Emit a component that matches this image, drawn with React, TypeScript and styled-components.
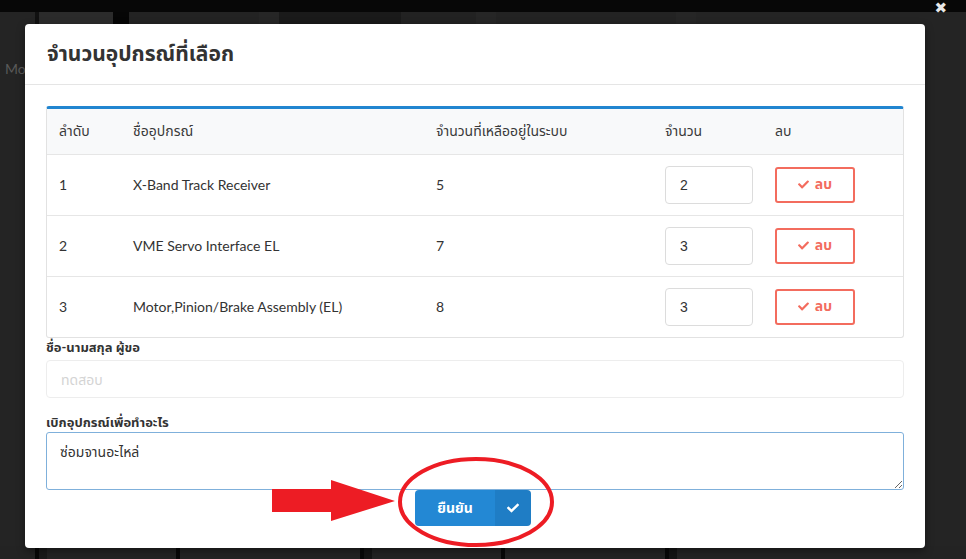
import styled, { createGlobalStyle } from 'styled-components'
import { FaCheck } from 'react-icons/fa'

const GlobalStyle = createGlobalStyle`
  html, body {
    margin: 0;
    padding: 0;
    background: #242424;
    overflow: hidden;
  }
  * {
    box-sizing: border-box;
  }
`

const font = `'Lato', 'Noto Sans Thai', 'Noto Sans', sans-serif`

const Screen = styled.div`
  position: relative;
  width: 966px;
  height: 559px;
  overflow: hidden;
  background: #242424;
  font-family: ${font};
`

const TopStrip = styled.div`
  height: 12px;
  background: #070707;
`

const BgBar = styled.div`
  display: flex;
  height: 16px;
`

const BgBlock = styled.div<{ $w: number; $c: string }>`
  width: ${(p) => p.$w}px;
  background: ${(p) => p.$c};
`

const BgText = styled.div`
  padding: 32px 0 0 5px;
  color: #5a5a5a;
  font-size: 14px;
`

const BottomStrip = styled.div`
  position: absolute;
  left: 0;
  right: 0;
  bottom: 0;
  height: 13px;
  display: flex;
  background: #232323;
`

const Close = styled.div`
  position: absolute;
  top: 1px;
  right: 19px;
  color: #e8e8e8;
  font-family: 'DejaVu Sans', sans-serif;
  font-size: 15px;
  line-height: 15px;
  font-weight: bold;
`

const Overlay = styled.div`
  position: absolute;
  inset: 0;
  padding-top: 24px;
  display: flex;
  justify-content: center;
  align-items: flex-start;
`

const Modal = styled.div`
  width: 900px;
  margin-left: -16px;
  background: #fff;
  border-radius: 4px;
  box-shadow: 0 3px 9px rgba(0, 0, 0, 0.4);
`

const Header = styled.div`
  height: 61px;
  padding: 0 22px;
  display: flex;
  align-items: center;
  border-bottom: 1px solid #e5e5e5;
`

const Title = styled.h4`
  margin: 0;
  font-size: 21px;
  font-weight: bold;
  color: #333;
`

const Body = styled.div`
  padding: 21px 21px 22px;
`

const TableBox = styled.div`
  border: 1px solid #e2e2e2;
  border-top: 3px solid #2185d0;
  border-radius: 3px;
  overflow: hidden;
`

const Table = styled.table`
  width: 100%;
  border-collapse: collapse;
  table-layout: fixed;
  font-size: 14px;
  color: #333;
`

const Col = styled.col<{ $w?: number }>`
  width: ${(p) => (p.$w ? `${p.$w}px` : 'auto')};
`

const Th = styled.th`
  height: 45px;
  padding: 0 0 0 12px;
  text-align: left;
  font-weight: normal;
  font-size: 14px;
  background: #f8f9fa;
  color: #3a3a3a;
`

const Td = styled.td`
  height: 61px;
  padding: 0 0 0 12px;
  border-top: 1px solid #e6e6e6;
`

const QtyInput = styled.input`
  width: 88px;
  height: 38px;
  padding: 0 14px;
  border: 1px solid #dcdcdc;
  border-radius: 4px;
  font-family: 'Liberation Sans', sans-serif;
  font-size: 14px;
  color: #333;
  outline: none;
`

const DeleteButton = styled.button`
  display: inline-flex;
  align-items: center;
  justify-content: center;
  gap: 6px;
  width: 80px;
  height: 36px;
  border: 2px solid #f36c5e;
  border-radius: 3px;
  background: #fff;
  color: #f36c5e;
  font-family: ${font};
  font-size: 14px;
  font-weight: bold;
  svg {
    font-size: 11px;
  }
`

const Label = styled.label<{ $top: number; $h: number }>`
  display: block;
  margin-top: ${(p) => p.$top}px;
  height: ${(p) => p.$h}px;
  line-height: 17px;
  font-size: 13px;
  font-weight: bold;
  color: #333;
`

const TextInput = styled.input`
  width: 100%;
  height: 38px;
  padding: 0 14px;
  border: 1px solid #ededed;
  border-radius: 4px;
  background: #fff;
  font-family: ${font};
  font-size: 14px;
  &::placeholder {
    color: #d4d4d4;
  }
`

const TextArea = styled.textarea`
  display: block;
  width: 100%;
  height: 58px;
  padding: 9px 13px;
  border: 1px solid #7fb0db;
  border-radius: 3px;
  font-family: ${font};
  font-size: 14px;
  color: #333;
  outline: none;
`

const Actions = styled.div`
  display: flex;
  justify-content: center;
  padding-right: 4px;
`

const ConfirmButton = styled.button`
  display: flex;
  height: 36px;
  padding: 0;
  border: none;
  border-radius: 4px;
  overflow: hidden;
  color: #fff;
  font-family: ${font};
  font-size: 14px;
  font-weight: bold;
`

const ConfirmLabel = styled.span`
  display: flex;
  align-items: center;
  justify-content: center;
  width: 80px;
  background: #2388d4;
`

const ConfirmIcon = styled.span`
  display: flex;
  align-items: center;
  justify-content: center;
  width: 36px;
  background: #1f7dc5;
  font-size: 12px;
`

const Annotation = styled.svg`
  position: absolute;
  inset: 0;
  pointer-events: none;
`

const rows = [
  { no: 1, name: 'X-Band Track Receiver', left: 5, qty: 2 },
  { no: 2, name: 'VME Servo Interface EL', left: 7, qty: 3 },
  { no: 3, name: 'Motor,Pinion/Brake Assembly (EL)', left: 8, qty: 3 },
]

const topBlocks: [number, string][] = [
  [35, '#242424'], [4, '#111'], [74, '#2b2b2b'], [16, '#060606'], [130, '#232323'],
  [20, '#262626'], [122, '#1a1a1a'], [75, '#222'], [20, '#262626'], [180, '#232323'],
  [20, '#262626'], [250, '#242424'],
]

const bottomBlocks: [number, string][] = [
  [35, '#232323'], [4, '#080808'], [8, '#1a1a1a'], [130, '#232323'], [4, '#080808'],
  [180, '#232323'], [4, '#080808'], [8, '#141414'], [130, '#232323'], [4, '#080808'],
  [160, '#232323'], [4, '#080808'], [8, '#141414'], [290, '#232323'],
]

export default function App() {
  return (
    <Screen>
      <GlobalStyle />
      <TopStrip />
      <BgBar>
        {topBlocks.map(([w, c], i) => (
          <BgBlock key={i} $w={w} $c={c} />
        ))}
      </BgBar>
      <BgText>Mo</BgText>
      <BottomStrip>
        {bottomBlocks.map(([w, c], i) => (
          <BgBlock key={i} $w={w} $c={c} />
        ))}
      </BottomStrip>
      <Close>✖</Close>

      <Overlay>
        <Modal>
          <Header>
            <Title>จำนวนอุปกรณ์ที่เลือก</Title>
          </Header>
          <Body>
            <TableBox>
              <Table>
                <colgroup>
                  <Col $w={74} />
                  <Col $w={303} />
                  <Col $w={229} />
                  <Col $w={110} />
                  <Col />
                </colgroup>
                <thead>
                  <tr>
                    <Th>ลำดับ</Th>
                    <Th>ชื่ออุปกรณ์</Th>
                    <Th>จำนวนที่เหลืออยู่ในระบบ</Th>
                    <Th>จำนวน</Th>
                    <Th>ลบ</Th>
                  </tr>
                </thead>
                <tbody>
                  {rows.map((r) => (
                    <tr key={r.no}>
                      <Td>{r.no}</Td>
                      <Td>{r.name}</Td>
                      <Td>{r.left}</Td>
                      <Td>
                        <QtyInput defaultValue={r.qty} />
                      </Td>
                      <Td>
                        <DeleteButton>
                          <FaCheck />
                          ลบ
                        </DeleteButton>
                      </Td>
                    </tr>
                  ))}
                </tbody>
              </Table>
            </TableBox>

            <Label $top={1} $h={21}>ชื่อ-นามสกุล ผู้ขอ</Label>
            <TextInput placeholder="ทดสอบ" disabled />

            <Label $top={16} $h={18}>เบิกอุปกรณ์เพื่อทำอะไร</Label>
            <TextArea defaultValue="ซ่อมจานอะไหล่" />

            <Actions>
              <ConfirmButton>
                <ConfirmLabel>ยืนยัน</ConfirmLabel>
                <ConfirmIcon>
                  <FaCheck />
                </ConfirmIcon>
              </ConfirmButton>
            </Actions>
          </Body>
        </Modal>
      </Overlay>

      <Annotation width="966" height="559" viewBox="0 0 966 559">
        <polygon
          points="272,489 331,489 331,480 395,501 331,521 331,512 272,512"
          fill="#ed1c24"
        />
        <ellipse cx="476" cy="502" rx="76" ry="43" fill="none" stroke="#ed1c24" strokeWidth="4" />
      </Annotation>
    </Screen>
  )
}
